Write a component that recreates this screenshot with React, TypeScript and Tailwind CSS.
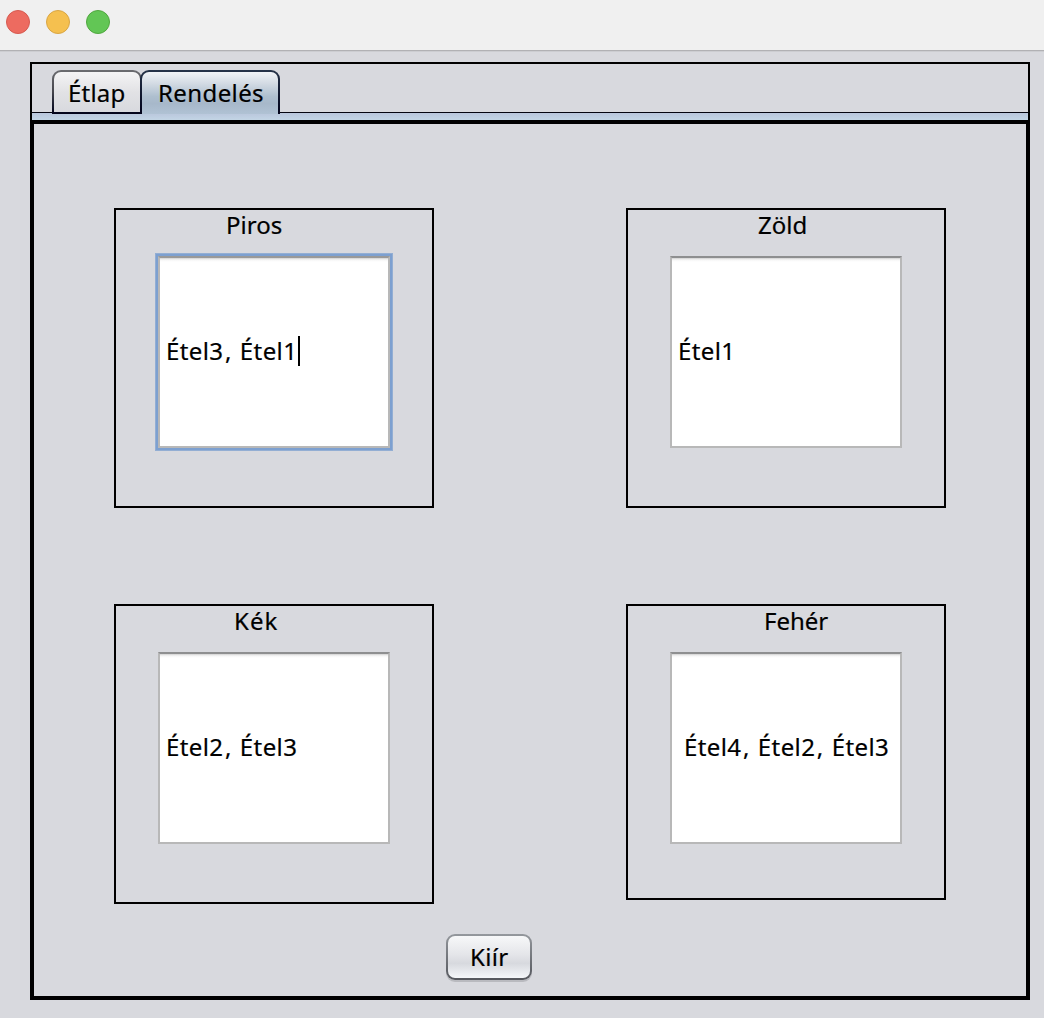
import React from 'react';

type OrderCardProps = {
  title: string;
  titleClass: string;
  value: string;
  valueClass: string;
  focused?: boolean;
  heightClass?: string;
};

function OrderCard({ title, titleClass, value, valueClass, focused = false, heightClass = 'h-[300px]' }: OrderCardProps) {
  return (
    <section className={`w-[320px] border-2 border-black ${heightClass}`}>
      <h2 className={`h-[46px] whitespace-nowrap text-[24px] leading-[30px] ${titleClass}`}>{title}</h2>
      <div
        className={`ml-[42px] flex h-[192px] w-[232px] items-center border-2 border-[#b8b8b8] bg-white bg-[linear-gradient(#cfcfcf_0px,#e6e6e6_1px,#f6f6f6_2px,#ffffff_4px)] pb-[2px] ${
          focused ? 'border-t-[#999999] shadow-[0_0_0_2px_#7da0d0,0_0_0_3px_#93aed3]' : 'border-t-[#8e8f90]'
        }`}
      >
        <span
          className={`whitespace-nowrap text-[24px] leading-[30px] tracking-[0.4px] [word-spacing:1.4px] ${valueClass}`}
        >
          {value.split(',').map((part, index) => (
            <React.Fragment key={part}>
              {index > 0 && <span className="pl-[1.5px]">,</span>}
              {part}
            </React.Fragment>
          ))}
        </span>
        {focused && <span className="ml-px h-[30px] w-[2px] bg-black" />}
      </div>
    </section>
  );
}

export default function App() {
  return (
    <div className="flex h-[1018px] w-[1044px] flex-col overflow-hidden bg-[#d8d9de] font-['Noto_Sans',sans-serif] text-black [-webkit-text-stroke:0.2px_black]">
      <header className="flex h-[51px] shrink-0 gap-4 border-b border-[#b1b1b4] bg-[#f0f0f0] pl-[6px] pt-[10px] shadow-[0_1px_0_#cccdd1]">
        <span className="size-6 rounded-full border border-[#d65a50] bg-[#ed6b60]" />
        <span className="size-6 rounded-full border border-[#d9a644] bg-[#f5c04f]" />
        <span className="size-6 rounded-full border border-[#50a73f] bg-[#62c655]" />
      </header>

      <main className="ml-[30px] mt-[11px] w-[1000px]">
        <div className="h-[58px] border-x-2 border-t-2 border-black">
          <nav className="relative flex h-[48px] pl-[20px] pt-[6px]">
            <button className="h-[44px] w-[90px] shrink-0 rounded-t-[9px] bg-linear-to-b from-[#6b6c70] via-[#45454c] to-[#03031a] p-[2px]">
              <span className="flex h-full rounded-t-[7px] bg-linear-to-b from-[#f4f4f5] via-[#e2e2e5] to-[#d8d9de] pl-[14px] text-[24px] leading-[42px] tracking-[0.2px]">
                Étlap
              </span>
            </button>
            <button className="-ml-[2px] h-[44px] w-[140px] shrink-0 rounded-t-[9px] bg-linear-to-b from-[#263449] to-[#03031a] px-[2px] pt-[2px]">
              <span className="flex h-full rounded-t-[7px] bg-[linear-gradient(#f1f4f7_0%,#d2dae3_28%,#aebfcf_58%,#a7b8ca_75%,#b0c2d4_100%)] pl-[16px] text-[24px] leading-[42px] tracking-[0.4px]">
                Rendelés
              </span>
            </button>
          </nav>
          <div className="h-[8px] border-t border-[#050510] bg-linear-to-b from-[#b9c6dc] to-[#c3d5e5]" />
        </div>

        <div className="h-[880px] border-4 border-black pl-[80px] pt-[84px]">
          <div className="grid grid-cols-[320px_320px] gap-x-[192px] gap-y-[96px]">
            <OrderCard title="Piros" titleClass="pl-[110px]" value="Étel3, Étel1" valueClass="pl-[6px]" focused />
            <OrderCard title="Zöld" titleClass="pl-[130px]" value="Étel1" valueClass="pl-[6px]" />
            <OrderCard title="Kék" titleClass="pl-[118px] tracking-[1.1px]" value="Étel2, Étel3" valueClass="pl-[6px]" />
            <OrderCard title="Fehér" titleClass="pl-[136px]" value="Étel4, Étel2, Étel3" valueClass="pl-[12px]" heightClass="h-[296px]" />
          </div>
          <button className="ml-[332px] mt-[30px] h-[46px] w-[86px] rounded-[9px] bg-linear-to-b from-[#94989d] to-[#55575d] p-[2px] shadow-[0_2px_0_#b9babf]">
            <span className="flex h-full items-center rounded-[7px] bg-[linear-gradient(#f7f8f9_0%,#e4e5e9_45%,#d7d9de_65%,#f5f7fa_100%)] pl-[22px] text-[24px] leading-[30px] tracking-[0.3px]">
              Kiír
            </span>
          </button>
        </div>
      </main>
    </div>
  );
}
